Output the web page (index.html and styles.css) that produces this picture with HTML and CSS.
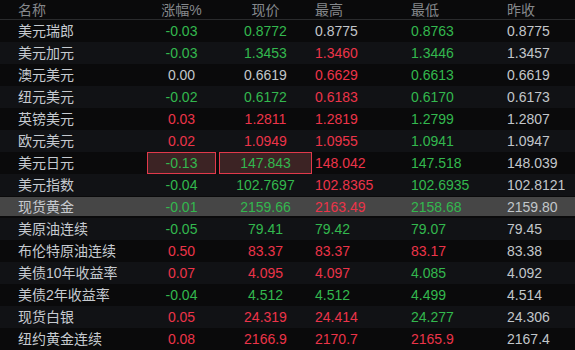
FILE: index.html
```html
<!DOCTYPE html>
<html lang="zh-CN">
<head>
    <meta charset="UTF-8">
    <title>外汇行情</title>
    <link rel="stylesheet" href="styles.css">
</head>
<body>
    <div class="quote-table">
        <div class="row head">
            <div class="cell name">名称</div>
            <div class="cell center">涨幅%</div>
            <div class="cell center">现价</div>
            <div class="cell">最高</div>
            <div class="cell">最低</div>
            <div class="cell">昨收</div>
        </div>

        <div class="row">
            <div class="cell name">美元瑞郎</div>
            <div class="cell center down">-0.03</div>
            <div class="cell center down">0.8772</div>
            <div class="cell flat">0.8775</div>
            <div class="cell down">0.8763</div>
            <div class="cell flat">0.8775</div>
        </div>
        <div class="row alt">
            <div class="cell name">美元加元</div>
            <div class="cell center down">-0.03</div>
            <div class="cell center down">1.3453</div>
            <div class="cell up">1.3460</div>
            <div class="cell down">1.3446</div>
            <div class="cell flat">1.3457</div>
        </div>
        <div class="row">
            <div class="cell name">澳元美元</div>
            <div class="cell center flat">0.00</div>
            <div class="cell center flat">0.6619</div>
            <div class="cell up">0.6629</div>
            <div class="cell down">0.6613</div>
            <div class="cell flat">0.6619</div>
        </div>
        <div class="row alt">
            <div class="cell name">纽元美元</div>
            <div class="cell center down">-0.02</div>
            <div class="cell center down">0.6172</div>
            <div class="cell up">0.6183</div>
            <div class="cell down">0.6170</div>
            <div class="cell flat">0.6173</div>
        </div>
        <div class="row">
            <div class="cell name">英镑美元</div>
            <div class="cell center up">0.03</div>
            <div class="cell center up">1.2811</div>
            <div class="cell up">1.2819</div>
            <div class="cell down">1.2799</div>
            <div class="cell flat">1.2807</div>
        </div>
        <div class="row alt">
            <div class="cell name">欧元美元</div>
            <div class="cell center up">0.02</div>
            <div class="cell center up">1.0949</div>
            <div class="cell up">1.0955</div>
            <div class="cell down">1.0941</div>
            <div class="cell flat">1.0947</div>
        </div>
        <div class="row">
            <div class="cell name">美元日元</div>
            <div class="cell center down flash">-0.13</div>
            <div class="cell center down flash">147.843</div>
            <div class="cell up">148.042</div>
            <div class="cell down">147.518</div>
            <div class="cell flat">148.039</div>
        </div>
        <div class="row alt">
            <div class="cell name">美元指数</div>
            <div class="cell center down">-0.04</div>
            <div class="cell center down">102.7697</div>
            <div class="cell up">102.8365</div>
            <div class="cell down">102.6935</div>
            <div class="cell flat">102.8121</div>
        </div>
        <div class="row selected">
            <div class="cell name">现货黄金</div>
            <div class="cell center down">-0.01</div>
            <div class="cell center down">2159.66</div>
            <div class="cell up">2163.49</div>
            <div class="cell down">2158.68</div>
            <div class="cell flat">2159.80</div>
        </div>
        <div class="row alt">
            <div class="cell name">美原油连续</div>
            <div class="cell center down">-0.05</div>
            <div class="cell center down">79.41</div>
            <div class="cell down">79.42</div>
            <div class="cell down">79.07</div>
            <div class="cell flat">79.45</div>
        </div>
        <div class="row">
            <div class="cell name">布伦特原油连续</div>
            <div class="cell center up">0.50</div>
            <div class="cell center up">83.37</div>
            <div class="cell up">83.37</div>
            <div class="cell up">83.17</div>
            <div class="cell flat">83.38</div>
        </div>
        <div class="row alt">
            <div class="cell name">美债10年收益率</div>
            <div class="cell center up">0.07</div>
            <div class="cell center up">4.095</div>
            <div class="cell up">4.097</div>
            <div class="cell down">4.085</div>
            <div class="cell flat">4.092</div>
        </div>
        <div class="row">
            <div class="cell name">美债2年收益率</div>
            <div class="cell center down">-0.04</div>
            <div class="cell center down">4.512</div>
            <div class="cell down">4.512</div>
            <div class="cell down">4.499</div>
            <div class="cell flat">4.514</div>
        </div>
        <div class="row alt">
            <div class="cell name">现货白银</div>
            <div class="cell center up">0.05</div>
            <div class="cell center up">24.319</div>
            <div class="cell up">24.414</div>
            <div class="cell down">24.277</div>
            <div class="cell flat">24.306</div>
        </div>
        <div class="row">
            <div class="cell name">纽约黄金连续</div>
            <div class="cell center up">0.08</div>
            <div class="cell center up">2166.9</div>
            <div class="cell up">2170.7</div>
            <div class="cell up">2165.9</div>
            <div class="cell flat">2167.4</div>
        </div>
    </div>
</body>
</html>
```

FILE: styles.css
```css
* {
    margin: 0;
    padding: 0;
    box-sizing: border-box;
}

body {
    background: #0a0a0b;
    font-family: "Liberation Sans", "Noto Sans CJK SC", sans-serif;
    font-size: 14px;
    color: #c4c8cc;
    overflow: hidden;
}

.quote-table {
    width: 575px;
}

.row {
    display: grid;
    grid-template-columns: 144px 69px 93px 93px 93px 1fr;
    column-gap: 3px;
    height: 22px;
    align-items: center;
}

.row.head {
    height: 20px;
    color: #85888c;
    border-bottom: 1px solid #2a2b2d;
    padding-bottom: 1px;
}

.row.alt {
    background: #111215;
}

.row.selected {
    background: #464646;
    border-top: 1px solid #0a0a0b;
    border-bottom: 2px solid #0a0a0b;
}

.cell {
    white-space: nowrap;
    line-height: 20px;
}

.cell.name {
    padding-left: 18px;
    color: #c6cad0;
}

.row.head .cell.name {
    color: #85888c;
}

.cell.center {
    text-align: center;
}

.up {
    color: #ec3449;
}

.down {
    color: #33b84e;
}

.flat {
    color: #c2c6ca;
}

.cell.flash {
    height: 22px;
    line-height: 20px;
    background: #3c2324;
    border: 1px solid #e2394b;
}
```
